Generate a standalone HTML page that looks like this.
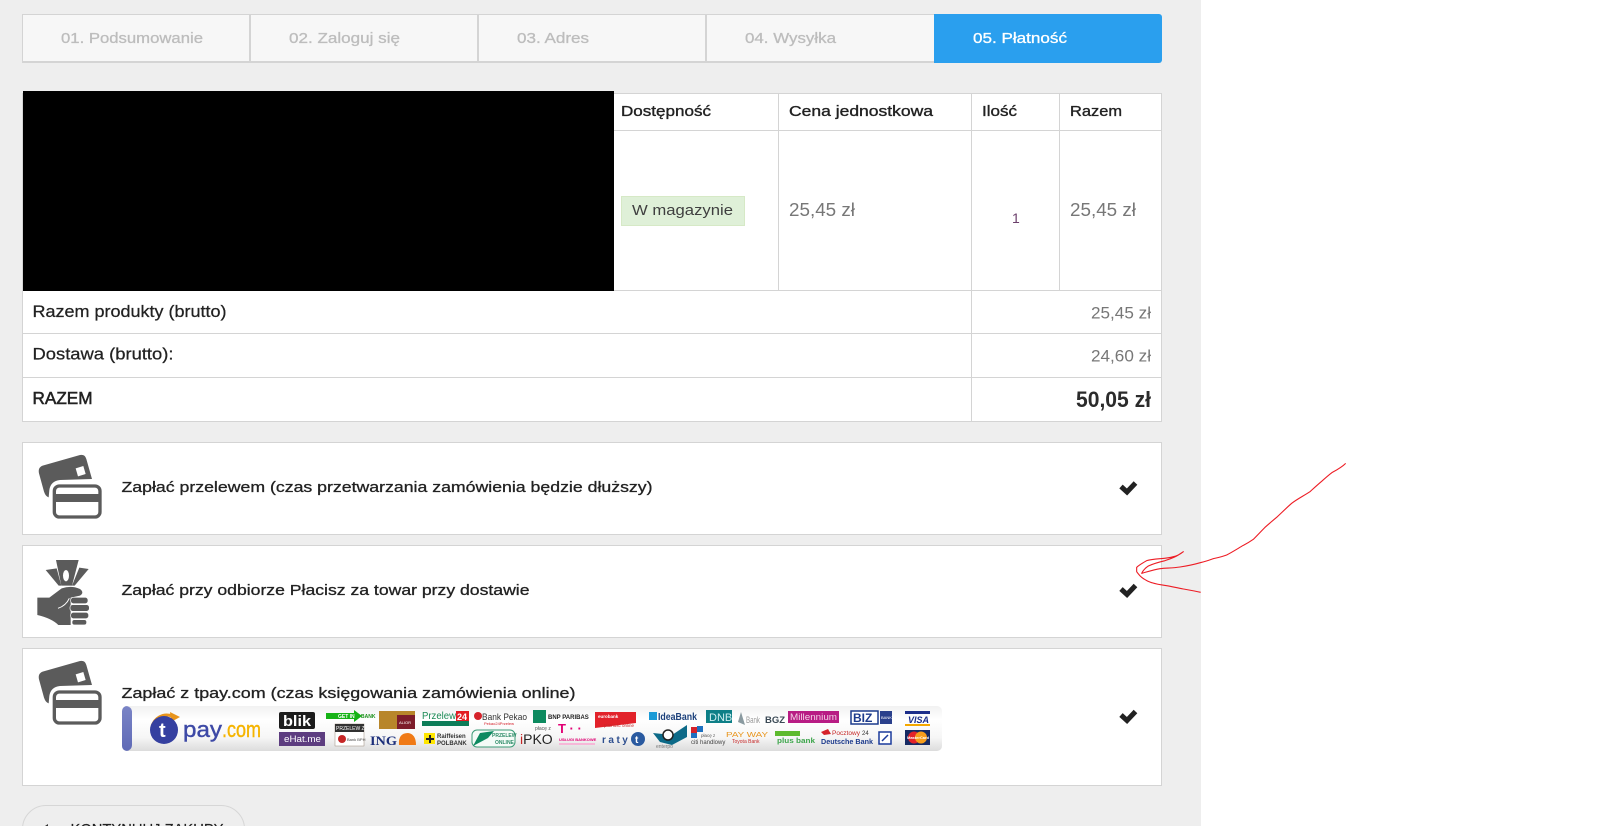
<!DOCTYPE html>
<html lang="pl">
<head>
<meta charset="utf-8">
<title>Płatność</title>
<style>
html,body{margin:0;padding:0;width:1624px;height:826px;overflow:hidden;background:#fff;}
body{position:relative;font-family:"Liberation Sans",sans-serif;}
.a{position:absolute;box-sizing:border-box;}
#panel{left:0;top:0;width:1201px;height:826px;background:#eee;}
.step{top:14px;height:49px;background:#f7f7f7;border:solid #d4d4d4;border-width:1px 0 2px 0;border-right:2px solid #d4d4d4;}
#blue{left:934px;top:14px;width:228px;height:49px;background:#2a9fee;border-radius:0 3px 3px 0;}
#table{left:22px;top:93px;width:1140px;height:329px;background:#fff;border:1px solid #d4d4d4;}
.h{background:#d4d4d4;height:1px;}
.v{background:#d4d4d4;width:1px;}
#black{left:23px;top:91px;width:591px;height:200px;background:#000;}
#badge{left:621px;top:196px;width:124px;height:30px;background:#dff0d8;border:1px solid #d6e9c6;}
.box{left:22px;width:1140px;background:#fff;border:1px solid #d4d4d4;}
#strip{left:122px;top:706px;width:820px;height:45px;border-radius:5px;background:linear-gradient(#f1f1f1,#fff 30%,#f6f6f6 70%,#dcdcdc);overflow:hidden;}
#strip i{position:absolute;left:0;top:0;width:10px;height:45px;background:linear-gradient(#7a84c6,#5f6ab6);border-radius:0 6px 6px 0;}
#btn{left:22px;top:805px;width:223px;height:60px;border:1px solid #d6d6d6;border-radius:24px;background:#eee;}
svg{position:absolute;left:0;top:0;}
</style>
</head>
<body>
<div class="a" id="panel"></div>
<div class="a step" style="left:22px;width:229px;border-left:1px solid #d4d4d4;"></div>
<div class="a step" style="left:251px;width:228px;"></div>
<div class="a step" style="left:479px;width:228px;"></div>
<div class="a step" style="left:707px;width:227px;border-right:0;"></div>
<div class="a" id="blue"></div>

<div class="a" id="table"></div>
<div class="a h" style="left:614px;top:130px;width:548px;"></div>
<div class="a h" style="left:22px;top:290px;width:1140px;"></div>
<div class="a h" style="left:22px;top:333px;width:1140px;"></div>
<div class="a h" style="left:22px;top:377px;width:1140px;"></div>
<div class="a v" style="left:778px;top:93px;height:197px;"></div>
<div class="a v" style="left:971px;top:93px;height:329px;"></div>
<div class="a v" style="left:1059px;top:93px;height:197px;"></div>
<div class="a" id="black"></div>
<div class="a" id="badge"></div>

<div class="a box" style="top:442px;height:93px;"></div>
<div class="a box" style="top:545px;height:93px;"></div>
<div class="a box" style="top:648px;height:138px;"></div>
<div class="a" id="strip"><i></i></div>
<div class="a" id="btn"></div>

<svg width="1624" height="826" viewBox="0 0 1624 826" font-family="'Liberation Sans',sans-serif">
<defs>
<filter id="b" x="-5%" y="-5%" width="110%" height="110%"><feGaussianBlur stdDeviation="0.3"/></filter>
<g id="cards">
<path d="M38 62L150 30Q165 27 169 42L186 102L90 105Q62 108 58 135L56 157Q47 155 42 140L27 85Q23 68 38 62Z" fill="#5b5b5b"/>
<path d="M137 70L160 63L167 87L144 94Z" fill="#fff"/>
<rect x="73" y="123" width="137" height="93" rx="15" fill="#fff" stroke="#5b5b5b" stroke-width="10"/>
<rect x="70" y="147" width="143" height="24" fill="#5b5b5b"/>
</g>
</defs>

<!-- steps -->
<g font-size="14.5" fill="#bdbdbd" stroke="#bdbdbd" stroke-width=".3">
<text x="61" y="43" textLength="142" lengthAdjust="spacingAndGlyphs">01. Podsumowanie</text>
<text x="289" y="43" textLength="111" lengthAdjust="spacingAndGlyphs">02. Zaloguj się</text>
<text x="517" y="43" textLength="72" lengthAdjust="spacingAndGlyphs">03. Adres</text>
<text x="745" y="43" textLength="91" lengthAdjust="spacingAndGlyphs">04. Wysyłka</text>
<text x="973" y="43" textLength="94" lengthAdjust="spacingAndGlyphs" fill="#fff" stroke="#fff">05. Płatność</text>
</g>

<!-- table header -->
<g font-size="14.5" fill="#222" stroke="#222" stroke-width=".35">
<text x="621" y="116" textLength="90" lengthAdjust="spacingAndGlyphs">Dostępność</text>
<text x="789" y="116" textLength="144" lengthAdjust="spacingAndGlyphs">Cena jednostkowa</text>
<text x="982" y="116" textLength="35" lengthAdjust="spacingAndGlyphs">Ilość</text>
<text x="1070" y="116" textLength="52" lengthAdjust="spacingAndGlyphs">Razem</text>
</g>
<text x="632" y="215" font-size="15" fill="#3f3f3f" textLength="101" lengthAdjust="spacingAndGlyphs">W magazynie</text>
<g font-size="18" fill="#777">
<text x="789" y="216" textLength="66" lengthAdjust="spacingAndGlyphs">25,45 zł</text>
<text x="1070" y="216" textLength="66" lengthAdjust="spacingAndGlyphs">25,45 zł</text>
<text x="1091" y="318.500" font-size="17" textLength="60" lengthAdjust="spacingAndGlyphs">25,45 zł</text>
<text x="1091" y="361.500" font-size="17" textLength="60" lengthAdjust="spacingAndGlyphs">24,60 zł</text>
</g>
<text x="1012" y="223" font-size="14" fill="#6b3f6b">1</text>

<!-- totals -->
<g font-size="16.5" fill="#222" stroke="#222" stroke-width=".25">
<text x="32.500" y="317" textLength="194" lengthAdjust="spacingAndGlyphs">Razem produkty (brutto)</text>
<text x="32.500" y="359.500" textLength="141" lengthAdjust="spacingAndGlyphs">Dostawa (brutto):</text>
<text x="32.500" y="404" font-size="17.500" stroke-width=".55" textLength="60" lengthAdjust="spacingAndGlyphs">RAZEM</text>
</g>
<text x="1076" y="407" font-size="22" font-weight="bold" fill="#2b2b2b" textLength="75" lengthAdjust="spacingAndGlyphs">50,05 zł</text>

<!-- payment labels -->
<g font-size="15" fill="#222" stroke="#222" stroke-width=".3">
<text x="121.500" y="492" textLength="531" lengthAdjust="spacingAndGlyphs">Zapłać przelewem (czas przetwarzania zamówienia będzie dłuższy)</text>
<text x="121.500" y="595" textLength="408" lengthAdjust="spacingAndGlyphs">Zapłać przy odbiorze Płacisz za towar przy dostawie</text>
<text x="121.500" y="698" textLength="454" lengthAdjust="spacingAndGlyphs">Zapłać z tpay.com (czas księgowania zamówienia online)</text>
</g>

<!-- icons -->
<use href="#cards" transform="translate(30 445) scale(.3333)"/>
<use href="#cards" transform="translate(30 651) scale(.3333)"/>
<g transform="translate(30 555) scale(.3333)" fill="#5b5b5b">
<path d="M78 15H146L126 92H94Z"/>
<path d="M47 45L80 40L94 92L86 92Z"/>
<path d="M176 42L148 38L126 92L134 92Z"/>
<ellipse cx="108" cy="62" rx="9" ry="17" fill="#fff"/>
<path d="M22 128H58L95 100Q125 90 150 102Q164 113 150 122L122 128V210H85Q65 190 22 180Z"/>
<path d="M84 160Q108 152 118 130" fill="none" stroke="#fff" stroke-width="3"/>
<rect x="122" y="127" width="52" height="19" rx="8" stroke="#fff" stroke-width="2"/>
<rect x="120" y="149" width="58" height="20" rx="8" stroke="#fff" stroke-width="2"/>
<rect x="122" y="172" width="54" height="19" rx="8" stroke="#fff" stroke-width="2"/>
<rect x="126" y="194" width="44" height="16" rx="7" stroke="#fff" stroke-width="2"/>
</g>

<!-- checks -->
<g fill="none" stroke="#222" stroke-width="5">
<path d="M1121 486.500L1127 492L1135.500 483"/>
<path d="M1121 589L1127 594.500L1135.500 585.500"/>
<path d="M1121 715L1127 720.500L1135.500 711.500"/>
</g>

<!-- tpay strip logos -->
<g filter="url(#b)">
<path d="M152 727A15 15 0 0 1 172 716" fill="none" stroke="#e8941c" stroke-width="3"/>
<path d="M170 712L180 717L171 722Z" fill="#e8941c"/>
<circle cx="164" cy="730" r="14" fill="#3640a0"/>
<text x="159" y="737" font-size="20" font-weight="bold" fill="#fff">t</text>
<text x="183" y="737" font-size="22" fill="#3e4aa6" stroke="#3e4aa6" stroke-width=".4" textLength="39" lengthAdjust="spacingAndGlyphs">pay</text>
<text x="222" y="737" font-size="22" fill="#f5b400" stroke="#f5b400" stroke-width=".4" textLength="39" lengthAdjust="spacingAndGlyphs">.com</text>

<rect x="279" y="712" width="36" height="17" rx="2" fill="#1f1f1f"/>
<text x="283" y="726" font-size="15" font-weight="bold" fill="#fff" textLength="28" lengthAdjust="spacingAndGlyphs">blik</text>
<rect x="279" y="732" width="46" height="14" fill="#5d3c80"/>
<text x="284" y="742" font-size="9" fill="#fff" textLength="37" lengthAdjust="spacingAndGlyphs">eHat.me</text>
<path d="M326 713H354V710L362 716L354 722V719H326Z" fill="#12b312"/>
<text x="338" y="718" font-size="5" font-weight="bold" fill="#fff">GET IN</text>
<text x="361" y="718" font-size="5" font-weight="bold" fill="#1a8f1a">BANK</text>
<rect x="379" y="711" width="36" height="18" fill="#b8862c"/>
<rect x="397" y="715" width="18" height="14" fill="#7d1f2a"/>
<text x="399" y="724" font-size="4" fill="#fff">ALIOR</text>
<rect x="335" y="724" width="29" height="22" fill="#fff" stroke="#9a8a7a" stroke-width=".5"/>
<rect x="335" y="724" width="29" height="8" fill="#333"/>
<text x="336" y="730" font-size="5" fill="#fff">PRZELEW Z</text>
<circle cx="342" cy="739" r="4" fill="#c62828"/>
<text x="347" y="741" font-size="4" fill="#444">Bank BPH</text>
<text x="370" y="745" font-size="13" font-weight="bold" font-family="'Liberation Serif',serif" fill="#1b2f7a" textLength="27" lengthAdjust="spacingAndGlyphs">ING</text>
<path d="M399 745Q398 733 408 733Q416 734 416 745Z" fill="#f07a13"/>
<text x="422" y="719" font-size="10" fill="#1a8a55" textLength="34" lengthAdjust="spacingAndGlyphs">Przelew</text>
<rect x="456" y="711" width="13" height="10" fill="#e31e24"/>
<text x="457" y="720" font-size="9" font-weight="bold" fill="#fff">24</text>
<rect x="422" y="721" width="47" height="5" fill="#0c7c59"/>
<circle cx="478" cy="716" r="4" fill="#d5202a"/>
<text x="482" y="720" font-size="9.500" fill="#333" textLength="45" lengthAdjust="spacingAndGlyphs">Bank Pekao</text>
<text x="484" y="725" font-size="4" fill="#d5202a">Pekao24Przelew</text>
<rect x="424" y="733" width="11" height="11" fill="#ffe600"/>
<path d="M429 735h2v3h3v2h-3v3h-2v-3h-3v-2h3z" fill="#222"/>
<text x="437" y="738" font-size="6" font-weight="bold" fill="#333">Raiffeisen</text>
<text x="437" y="745" font-size="6" font-weight="bold" fill="#333">POLBANK</text>
<rect x="472" y="730" width="43" height="17" rx="5" fill="#f4fbf7" stroke="#3b9b77"/>
<path d="M473 746L488 738L494 731L480 733Z" fill="#0e8a60"/>
<text x="492" y="737" font-size="5" font-weight="bold" fill="#2d8c68">PRZELEW</text>
<text x="495" y="744" font-size="5" font-weight="bold" fill="#2d8c68">ONLINE</text>
<rect x="533" y="710" width="13" height="13" fill="#0a8a5e"/>
<text x="548" y="719" font-size="6" font-weight="bold" fill="#222">BNP PARIBAS</text>
<text x="535" y="730" font-size="5" fill="#555">płacę z</text>
<text x="520" y="744" font-size="14" fill="#222"><tspan fill="#c62828">i</tspan>PKO</text>
<text x="558" y="733" font-size="13" font-weight="bold" fill="#e20074">T · ·</text>
<text x="559" y="741" font-size="4" font-weight="bold" fill="#e20074">USŁUGI BANKOWE</text>
<rect x="559" y="743" width="36" height="2" fill="#f6b8d8"/>
<path d="M595 712H636V723L595 728Z" fill="#e2202a"/>
<text x="598" y="718" font-size="4.500" font-weight="bold" fill="#fff">eurobank</text>
<text x="604" y="727" font-size="4.500" fill="#c62828">płatność online</text>
<rect x="649" y="712" width="8" height="8" fill="#1f9bd7"/>
<text x="658" y="720" font-size="10" font-weight="bold" fill="#1a3f7a" textLength="39" lengthAdjust="spacingAndGlyphs">IdeaBank</text>
<rect x="706" y="710" width="26" height="13" fill="#0f7f87"/>
<text x="709" y="721" font-size="11" fill="#cfeef0">DNB</text>
<path d="M741 712L745 725L738 722Z" fill="#8a9aa0"/>
<text x="746" y="723" font-size="9.500" fill="#999" textLength="14" lengthAdjust="spacingAndGlyphs">Bank</text>
<text x="765" y="723" font-size="9.500" font-weight="bold" fill="#3a4a55">BGZ</text>
<rect x="788" y="711" width="51" height="12" fill="#b81d84"/>
<text x="790" y="720" font-size="9.500" fill="#f3cfe6" textLength="47" lengthAdjust="spacingAndGlyphs">Millennium</text>
<rect x="851" y="711" width="27" height="13" fill="#fff" stroke="#1d3a8c" stroke-width="1.500"/>
<text x="853" y="722" font-size="12" font-weight="bold" fill="#1d3a8c">BIZ</text>
<rect x="880" y="711" width="12" height="13" fill="#2a3f8c"/>
<text x="881" y="719" font-size="4" fill="#fff">BANK</text>
<rect x="905" y="711" width="25" height="3" fill="#1a2e8a"/>
<text x="908" y="723" font-size="9" font-weight="bold" font-style="italic" fill="#1a2e8a">VISA</text>
<rect x="905" y="724" width="25" height="2" fill="#f5a800"/>
<rect x="905" y="730" width="25" height="15" fill="#132a63"/>
<circle cx="914" cy="737.500" r="6" fill="#e3202a"/>
<circle cx="921" cy="737.500" r="6" fill="#f79e1b"/>
<text x="907" y="739" font-size="4" font-weight="bold" fill="#fff">MasterCard</text>
<text x="602" y="743" font-size="10" font-weight="bold" fill="#2f4f8f" letter-spacing="2.500">raty</text>
<circle cx="638" cy="739" r="7" fill="#2b5aa0"/>
<text x="635" y="743" font-size="10" font-weight="bold" fill="#fff">t</text>
<path d="M653 733L672 735L687 725V737L672 745L660 742Z" fill="#0f6b88"/>
<circle cx="668" cy="735" r="5" fill="#fff" stroke="#222" stroke-width="1.500"/>
<text x="656" y="748" font-size="5" fill="#777">enterpo</text>
<rect x="691" y="727" width="6" height="6" fill="#d5202a"/>
<rect x="697" y="726" width="6" height="6" fill="#1f6fc0"/>
<rect x="691" y="733" width="6" height="5" fill="#1f6fc0"/>
<text x="701" y="737" font-size="4.500" fill="#555">płacę z</text>
<text x="691" y="744" font-size="6" fill="#444">citi handlowy</text>
<text x="726" y="737" font-size="7.500" fill="#e8941c" textLength="42" lengthAdjust="spacingAndGlyphs">PAY WAY</text>
<text x="732" y="743" font-size="5" fill="#c62828">Toyota Bank</text>
<rect x="775" y="731" width="25" height="5" fill="#5dba2f"/>
<text x="777" y="743" font-size="7.500" font-weight="bold" fill="#3ca54b" textLength="38" lengthAdjust="spacingAndGlyphs">plus bank</text>
<path d="M821 732L828 729L831 734L824 735Z" fill="#d5202a"/>
<text x="832" y="735" font-size="6" fill="#c62828" textLength="28" lengthAdjust="spacingAndGlyphs">Pocztowy</text>
<text x="862" y="735" font-size="6" fill="#333">24</text>
<text x="821" y="744" font-size="7" font-weight="bold" fill="#1d3a8c" textLength="52" lengthAdjust="spacingAndGlyphs">Deutsche Bank</text>
<rect x="879" y="732" width="12" height="12" fill="#fff" stroke="#1a3a9c" stroke-width="1.500"/>
<path d="M882 741L888 735" stroke="#1a3a9c" stroke-width="1.500"/>
</g>

<!-- red arrow -->
<g transform="translate(1080 440) scale(.33333)" fill="none" stroke="#ed1c24" stroke-width="3.300" stroke-linejoin="round">
<path d="M797 70C785 82 770 90 757 97C745 106 735 115 725 124C712 135 700 146 690 155C670 168 650 178 635 190C618 205 605 218 590 232C578 242 566 252 555 262C543 274 532 286 520 298C510 305 500 311 490 316C473 326 456 337 440 345C427 350 413 353 400 356C388 360 377 364 365 367C344 373 322 378 300 381C280 384 260 384 240 386C222 389 203 395 185 400C190 390 197 383 205 378C222 370 238 366 255 362C270 357 284 352 295 345L310 335C300 343 292 348 280 350C267 354 253 355 240 356C226 357 212 358 200 362C190 368 178 374 170 382L170 395C175 402 180 408 185 412C195 420 205 425 215 428C230 433 245 435 260 437C277 440 293 444 310 447C327 450 345 453 362 457"/>
</g>

<!-- button -->
<text x="70.500" y="834" font-size="15" fill="#222" stroke="#222" stroke-width=".2" textLength="153" lengthAdjust="spacingAndGlyphs">KONTYNUUJ ZAKUPY</text>
<path d="M45 826L48 824V826Z" fill="#333"/>
</svg>
</body>
</html>
